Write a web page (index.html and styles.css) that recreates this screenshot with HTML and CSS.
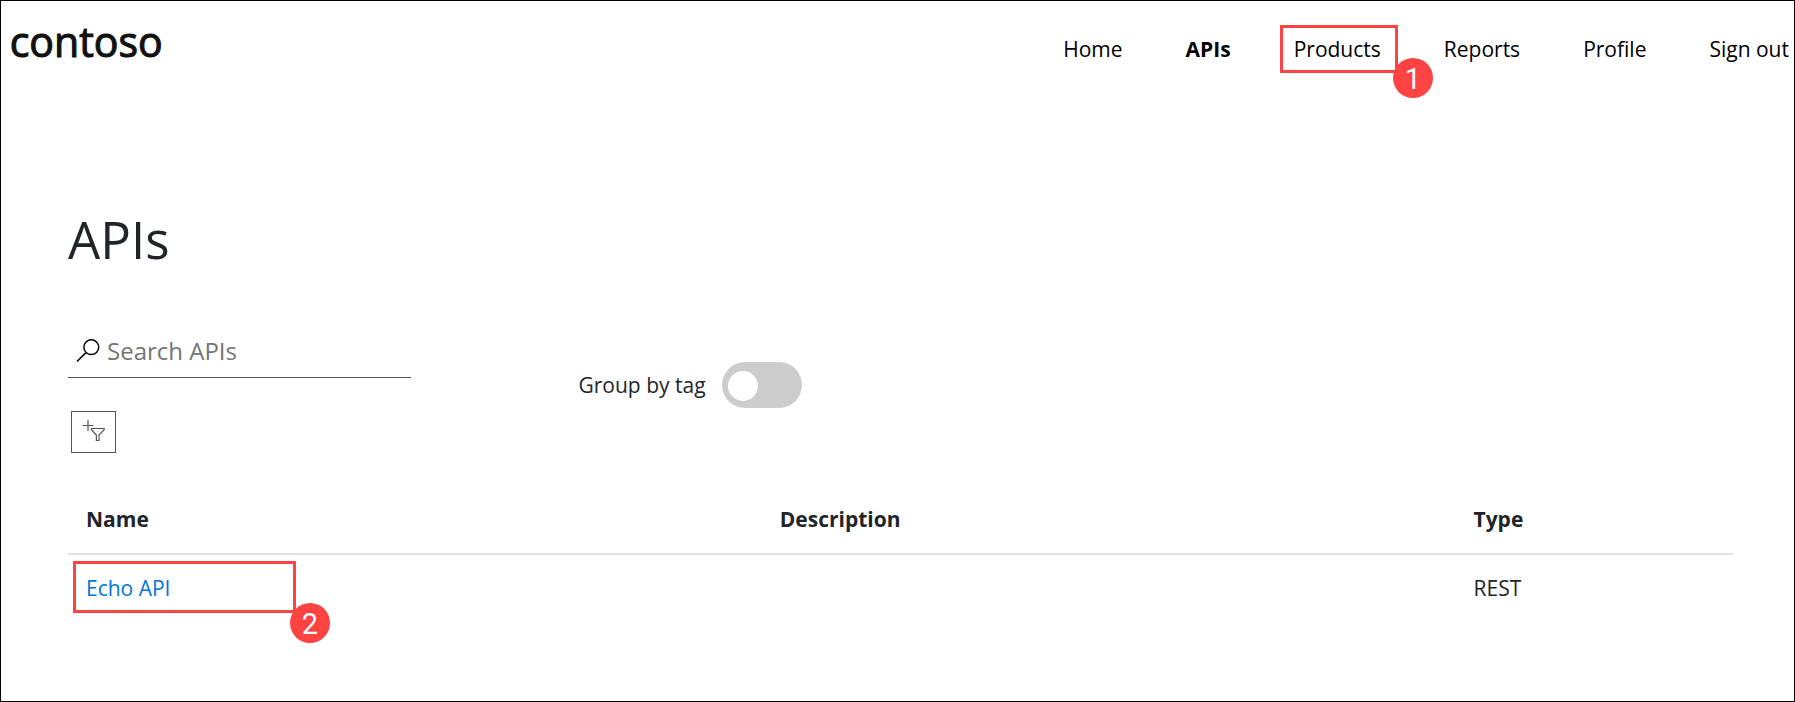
FILE: index.html
```html
<!DOCTYPE html>
<html lang="en">
<head>
<meta charset="utf-8">
<title>APIs - contoso</title>
<link rel="stylesheet" href="styles.css">
</head>
<body>
<div class="page">
  <header class="header">
    <svg class="logo" viewBox="0 0 154 44" role="img" aria-label="contoso"><text x="-.3" y="38.4" textLength="153" lengthAdjust="spacingAndGlyphs">contoso</text></svg>
    <nav class="nav">
      <a>Home</a>
      <a class="active">APIs</a>
      <a class="marked">Products<span class="callout callout-nav"><span class="badge">1</span></span></a>
      <a>Reports</a>
      <a>Profile</a>
      <a>Sign out</a>
    </nav>
  </header>
  <main class="content">
    <h1 class="title">APIs</h1>
    <div class="tools">
      <div class="filters">
        <div class="search">
          <svg class="search-icon" viewBox="0 0 24 24"><circle cx="15.3" cy="8.2" r="7.4"/><path d="M10 13.6 1 22.5"/></svg>
          <span>Search APIs</span>
        </div>
        <button class="filter" aria-label="Add filter">
          <svg class="filter-icon" viewBox="0 0 24 24"><path d="M6 1v11M.5 6.5h11M9.4 9.5h12.8v1.2l-5.2 5.3v5.5h-2.6v-5.5l-5-5.3z"/></svg>
        </button>
      </div>
      <div class="group">
        <span class="group-label">Group by tag</span>
        <span class="toggle"><span class="knob"></span></span>
      </div>
    </div>
    <div class="table">
      <div class="row head"><div>Name</div><div>Description</div><div>Type</div></div>
      <div class="row"><div class="marked"><a class="link">Echo API</a><span class="callout callout-row"><span class="badge">2</span></span></div><div></div><div>REST</div></div>
    </div>
  </main>
</div>
</body>
</html>
```

FILE: styles.css
```css
* { box-sizing: border-box; }
body { margin: 0; background: #fff; color: #212529; font: 21px/31.5px "Open Sans", "Noto Sans", sans-serif; }
.page { height: 702px; border: 1px solid #000; overflow: hidden; }
.header { display: flex; justify-content: space-between; height: 159px; padding: 18px 5px 0 9px; }
.logo { width: 154px; height: 44px; overflow: visible; }
.logo text { font: 500 41.5px "Open Sans", sans-serif; fill: #111; stroke: #111; stroke-width: 1.1; }
.nav { display: flex; gap: 63px; padding-top: 15px; color: #000; white-space: nowrap; }
.nav a { height: 32px; }
.nav .active { font-weight: 700; }
.marked { position: relative; }
.callout { position: absolute; border: 3px solid #ff4343; }
.callout-nav { left: -13.7px; top: -9px; width: 118px; height: 48px; }
.callout-row { left: 5px; top: 6px; width: 223px; height: 52px; }
.badge { position: absolute; right: -38px; bottom: -28px; width: 40px; height: 40px; border-radius: 50%; background: #ff4343; color: #fff; font: 29px/42px Roboto, "Liberation Sans", sans-serif; text-align: center; }
.callout-row .badge { right: -37px; bottom: -33px; }
.content { padding: 48px 61px 0 67px; }
.title { margin: 0; font-size: 51px; font-weight: 400; line-height: 63px; }
.tools { display: flex; gap: 167.5px; height: 216px; padding-top: 53px; }
.filters { width: 343px; }
.search { display: flex; align-items: center; gap: 7px; height: 54px; padding: 0 0 0 8px; border-bottom: 1px solid #555; color: #757575; font-size: 24px; }
.search-icon { width: 24px; height: 24px; fill: none; stroke: #000; stroke-width: 1.5; }
.filter { display: flex; width: 45px; height: 42px; margin: 33px 0 0 3px; padding: 7px 0 0 10px; border: 1px solid #555; background: #fff; }
.filter-icon { width: 24px; height: 24px; fill: none; stroke: #555; stroke-width: 1.2; }
.group { display: flex; align-items: center; gap: 16.5px; height: 46px; margin-top: 38px; }
.group-label { padding-top: 2px; }
.toggle { display: flex; align-items: center; width: 80px; height: 46px; padding: 2px 6px 0; border-radius: 23px; background: #ccc; }
.knob { width: 30px; height: 30px; border-radius: 50%; background: #fff; }
.row { display: grid; grid-template-columns: 5fr 5fr 2fr; }
.row > div { padding: 18px; }
.head > div { padding-top: 17px; padding-bottom: 17px; }
.head { border-bottom: 2px solid #dee2e6; font-weight: 700; }
.link { color: #0078d4; }
```
